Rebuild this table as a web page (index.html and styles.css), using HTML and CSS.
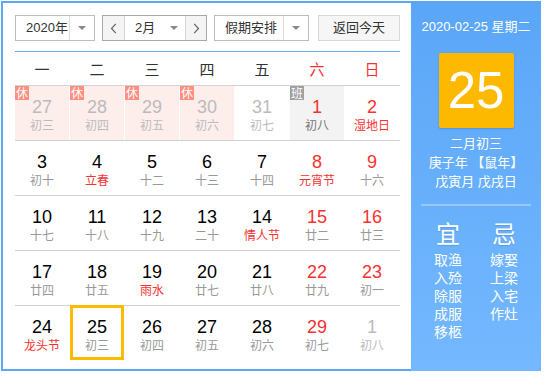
FILE: index.html
```html
<!DOCTYPE html>
<html lang="zh-CN">
<head>
<meta charset="utf-8">
<title>万年历</title>
<link rel="stylesheet" href="styles.css">
</head>
<body>
<div class="cal">
  <div class="main">
    <div class="toolbar">
      <div class="sel sel-year">
        <span class="sel-text">2020年</span>
        <span class="sel-arrow"><i class="tri"></i></span>
      </div>
      <div class="month-group">
        <span class="nav-btn nav-prev"><svg width="7" height="11" viewBox="0 0 7 11"><path d="M5.8 0.8 L1.5 5.5 L5.8 10.2" stroke="#666" stroke-width="1.2" fill="none"/></svg></span>
        <span class="month-text">2月</span>
        <span class="month-arrow"><i class="tri"></i></span>
        <span class="nav-btn nav-next"><svg width="7" height="11" viewBox="0 0 7 11"><path d="M1.2 0.8 L5.5 5.5 L1.2 10.2" stroke="#666" stroke-width="1.2" fill="none"/></svg></span>
      </div>
      <div class="sel sel-holiday">
        <span class="sel-text">假期安排</span>
        <span class="sel-arrow"><i class="tri"></i></span>
      </div>
      <div class="btn-today">返回今天</div>
    </div>

    <div class="weekhead">
      <span>一</span><span>二</span><span>三</span><span>四</span><span>五</span><span class="red">六</span><span class="red">日</span>
    </div>

    <div class="row">
      <div class="cell rest other"><i class="badge badge-rest">休</i><b class="num">27</b><span class="lunar">初三</span></div>
      <div class="cell rest other"><i class="badge badge-rest">休</i><b class="num">28</b><span class="lunar">初四</span></div>
      <div class="cell rest other"><i class="badge badge-rest">休</i><b class="num">29</b><span class="lunar">初五</span></div>
      <div class="cell rest other"><i class="badge badge-rest">休</i><b class="num">30</b><span class="lunar">初六</span></div>
      <div class="cell other"><b class="num">31</b><span class="lunar">初七</span></div>
      <div class="cell work weekend"><i class="badge badge-work">班</i><b class="num">1</b><span class="lunar dark">初八</span></div>
      <div class="cell weekend"><b class="num">2</b><span class="lunar fest">湿地日</span></div>
    </div>
    <div class="row">
      <div class="cell"><b class="num">3</b><span class="lunar">初十</span></div>
      <div class="cell"><b class="num">4</b><span class="lunar fest">立春</span></div>
      <div class="cell"><b class="num">5</b><span class="lunar">十二</span></div>
      <div class="cell"><b class="num">6</b><span class="lunar">十三</span></div>
      <div class="cell"><b class="num">7</b><span class="lunar">十四</span></div>
      <div class="cell weekend"><b class="num">8</b><span class="lunar fest">元宵节</span></div>
      <div class="cell weekend"><b class="num">9</b><span class="lunar">十六</span></div>
    </div>
    <div class="row">
      <div class="cell"><b class="num">10</b><span class="lunar">十七</span></div>
      <div class="cell"><b class="num">11</b><span class="lunar">十八</span></div>
      <div class="cell"><b class="num">12</b><span class="lunar">十九</span></div>
      <div class="cell"><b class="num">13</b><span class="lunar">二十</span></div>
      <div class="cell"><b class="num">14</b><span class="lunar fest">情人节</span></div>
      <div class="cell weekend"><b class="num">15</b><span class="lunar">廿二</span></div>
      <div class="cell weekend"><b class="num">16</b><span class="lunar">廿三</span></div>
    </div>
    <div class="row">
      <div class="cell"><b class="num">17</b><span class="lunar">廿四</span></div>
      <div class="cell"><b class="num">18</b><span class="lunar">廿五</span></div>
      <div class="cell"><b class="num">19</b><span class="lunar fest">雨水</span></div>
      <div class="cell"><b class="num">20</b><span class="lunar">廿七</span></div>
      <div class="cell"><b class="num">21</b><span class="lunar">廿八</span></div>
      <div class="cell weekend"><b class="num">22</b><span class="lunar">廿九</span></div>
      <div class="cell weekend"><b class="num">23</b><span class="lunar">初一</span></div>
    </div>
    <div class="row row-last">
      <div class="cell"><b class="num">24</b><span class="lunar fest">龙头节</span></div>
      <div class="cell today"><b class="num">25</b><span class="lunar">初三</span></div>
      <div class="cell"><b class="num">26</b><span class="lunar">初四</span></div>
      <div class="cell"><b class="num">27</b><span class="lunar">初五</span></div>
      <div class="cell"><b class="num">28</b><span class="lunar">初六</span></div>
      <div class="cell weekend"><b class="num">29</b><span class="lunar">初七</span></div>
      <div class="cell other"><b class="num">1</b><span class="lunar">初八</span></div>
    </div>
  </div>

  <div class="side">
    <div class="side-date">2020-02-25 星期二</div>
    <div class="big-day">25</div>
    <div class="side-lunar">
      <div>二月初三</div>
      <div>庚子年 【鼠年】</div>
      <div>戊寅月 戊戌日</div>
    </div>
    <div class="side-sep"></div>
    <div class="yiji">
      <div class="yiji-col">
        <div class="yiji-head">宜</div>
        <div class="yiji-items">
          <div>取渔</div><div>入殓</div><div>除服</div><div>成服</div><div>移柩</div>
        </div>
      </div>
      <div class="yiji-col">
        <div class="yiji-head">忌</div>
        <div class="yiji-items">
          <div>嫁娶</div><div>上梁</div><div>入宅</div><div>作灶</div>
        </div>
      </div>
    </div>
  </div>
</div>
</body>
</html>
```

FILE: styles.css
```css
*,
*::before,
*::after {
  box-sizing: border-box;
  margin: 0;
  padding: 0;
}

body {
  margin: 0;
  background: #fff;
  font-family: "Liberation Sans", "Noto Sans CJK SC", sans-serif;
  color: #000;
}

.cal {
  display: flex;
  margin: 1px;
  width: 540px;
  height: 370px;
}

.main {
  width: 410px;
  height: 370px;
  border: 2px solid #5ca8f6;
  border-right: 0;
  padding: 12px 11px 0 12px;
}

/* toolbar */
.toolbar {
  display: flex;
  height: 26px;
  font-size: 13px;
  color: #333;
  margin-bottom: 10px;
}

.sel {
  display: flex;
  border: 1px solid #bdbdbd;
  height: 26px;
  background: #fff;
}

.sel-text {
  line-height: 24px;
  padding-left: 10px;
}

.sel-arrow {
  width: 25px;
  border-left: 1px solid #dcdcdc;
  display: flex;
  align-items: center;
  justify-content: center;
}

.tri {
  display: block;
  width: 0;
  height: 0;
  border-left: 4px solid transparent;
  border-right: 4px solid transparent;
  border-top: 4px solid #888;
}

.sel-year {
  width: 80px;
  margin-right: 7px;
}

.sel-year .sel-text {
  width: 54px;
}

.sel-holiday {
  width: 95px;
  margin-right: 9px;
}

.sel-holiday .sel-text {
  width: 69px;
}

.month-group {
  display: flex;
  width: 105px;
  height: 26px;
  border: 1px solid #a8a8a8;
  margin-right: 7px;
}

.nav-btn {
  width: 22px;
  background: #f4f4f4;
  display: flex;
  align-items: center;
  justify-content: center;
}

.nav-prev {
  border-right: 1px solid #d4d4d4;
}

.nav-next {
  width: 21px;
  border-left: 1px solid #d4d4d4;
}

.month-text {
  width: 38px;
  line-height: 24px;
  padding-left: 10px;
}

.month-arrow {
  width: 22px;
  display: flex;
  align-items: center;
  justify-content: center;
}

.btn-today {
  width: 82px;
  height: 26px;
  border: 1px solid #d8d8d8;
  background: #f6f6f6;
  line-height: 24px;
  text-align: center;
}

/* week header */
.weekhead {
  display: grid;
  grid-template-columns: repeat(7, 55px);
  height: 35px;
  border-top: 1px solid #64abf4;
  border-bottom: 1px solid #d2d2d2;
  align-items: center;
  font-size: 15px;
  color: #333;
  font-family: "Noto Sans CJK SC", sans-serif;
}

.weekhead span {
  width: 54px;
  text-align: center;
}

.red {
  color: #f73131;
}

/* rows */
.row {
  display: grid;
  grid-template-columns: repeat(7, 55px);
  height: 55px;
  border-bottom: 1px solid #d2d2d2;
}

.row-last {
  border-bottom: 0;
}

.cell {
  position: relative;
  width: 54px;
  height: 54px;
  padding-top: 10px;
  display: flex;
  flex-direction: column;
  align-items: center;
}

.num {
  font-weight: normal;
  font-size: 18px;
  line-height: 22px;
  color: #000;
}

.lunar {
  font-size: 12px;
  line-height: 14px;
  color: #999;
  font-family: "Noto Sans CJK SC", sans-serif;
}

.lunar.dark {
  color: #777;
}

.lunar.fest {
  color: #f73131;
}

.weekend .num {
  color: #f73131;
}

.other .num,
.other .lunar {
  color: #bbb;
}

.rest {
  background: #fdeeec;
}

.work {
  background: #f3f3f3;
}

.badge {
  position: absolute;
  top: 0;
  left: 0;
  width: 14px;
  height: 14px;
  font-style: normal;
  font-size: 12px;
  line-height: 14px;
  text-align: center;
  color: #fff;
  font-family: "Noto Sans CJK SC", sans-serif;
}

.badge-rest {
  background: #ff8f80;
}

.badge-work {
  background: #a0a0a0;
}

.today::after {
  content: "";
  position: absolute;
  left: 0;
  top: -1px;
  width: 54px;
  height: 55px;
  border: 3px solid #ffbb00;
}

/* side panel */
.side {
  width: 130px;
  height: 370px;
  background: linear-gradient(#5aa6f7, #74b8ff);
  color: #fff;
  text-align: center;
  padding-top: 16px;
  font-family: "Liberation Sans", "Noto Sans CJK SC", sans-serif;
}

.side-date {
  font-size: 13px;
  line-height: 20px;
}

.big-day {
  width: 75px;
  height: 75px;
  margin: 16px auto 0;
  background: #fdb900;
  border-radius: 2px;
  box-shadow: 0 1px 2px rgba(0, 0, 0, 0.15);
  font-size: 51px;
  line-height: 75px;
}

.side-lunar {
  margin-top: 6px;
  font-size: 13px;
  line-height: 19px;
}

.side-sep {
  height: 2px;
  margin: 13px 10px 0;
  background: rgba(255, 255, 255, 0.3);
}

.yiji {
  display: flex;
  padding: 12px 9px 0;
}

.yiji-col {
  width: 56px;
}

.yiji-head {
  font-size: 24px;
  line-height: 30px;
  font-family: "Noto Sans CJK SC", sans-serif;
  text-shadow: 0 1px 1px rgba(0, 0, 0, 0.12);
}

.yiji-items {
  margin-top: 2px;
  font-size: 14px;
  line-height: 18px;
  font-family: "Noto Sans CJK SC", sans-serif;
}
```
